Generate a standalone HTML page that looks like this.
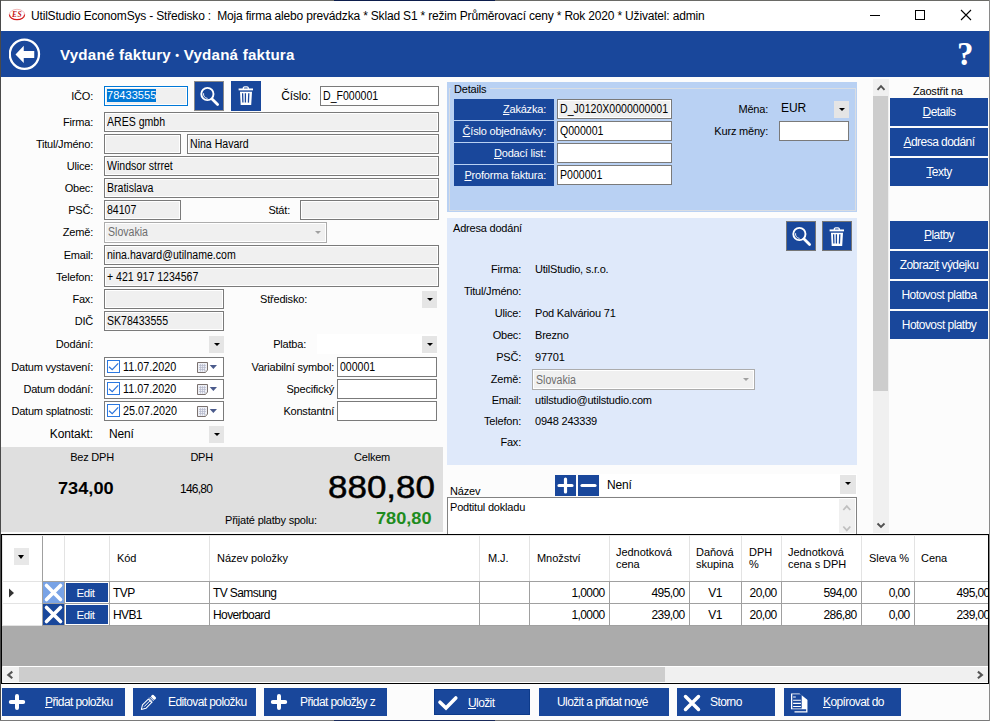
<!DOCTYPE html>
<html><head><meta charset="utf-8">
<style>
*{margin:0;padding:0;box-sizing:border-box}
html,body{width:990px;height:721px;overflow:hidden;background:#fcfcfc}
body{position:relative;font-family:"Liberation Sans",sans-serif;font-size:11px;color:#000;letter-spacing:-0.2px}
.a{position:absolute}
.t{position:absolute;white-space:nowrap;line-height:13px}
.r{text-align:right}
.tb{position:absolute;border:1px solid #7a7a7a;background:#f0f0f0;height:20px;padding-left:2px;line-height:18px;white-space:nowrap;overflow:hidden;box-shadow:inset 0 0 0 1px #fff}
.tw{background:#fff}
.tx{display:inline-block;font-size:12px;letter-spacing:0;transform:scaleX(0.88);transform-origin:0 50%;vertical-align:top}
.bb{position:absolute;background:#19479b}
.dd{position:absolute;width:15px;height:17px;background:#e5e5e5}
.dd:after{content:"";position:absolute;left:4.5px;top:7px;border-left:3px solid transparent;border-right:3px solid transparent;border-top:3px solid #000}
.rb{position:absolute;left:890px;width:98px;height:28px;background:#19479b;color:#fff;font-size:12px;text-align:center;line-height:28px;white-space:nowrap;letter-spacing:-0.55px}
.lc{position:absolute;left:454px;width:100px;height:21px;background:#19479b;color:#fff;text-align:right;padding-right:8px;line-height:21px;white-space:nowrap}
.u{text-decoration:underline}
.gl{position:absolute;background:#a0a0a0}
.fb{position:absolute;top:688px;height:28px;background:#19479b;color:#fff;font-size:12px;line-height:26px;white-space:nowrap;letter-spacing:-0.6px}
</style></head><body>
<!-- window frame -->
<div class="a" style="left:0;top:0;width:990px;height:1px;background:#6a6a66"></div>
<div class="a" style="left:0;top:0;width:1px;height:721px;background:#4a4a4a"></div>
<div class="a" style="left:989px;top:0;width:1px;height:721px;background:#8a8a8a"></div>
<div class="a" style="left:0;top:720px;width:990px;height:1px;background:#7a7a7a"></div>
<div class="a" style="left:334px;top:0;width:161px;height:1px;background:#0c1d4c"></div>
<div class="a" style="left:334px;top:720px;width:161px;height:1px;background:#1a2a5a"></div>
<!-- title bar -->
<div class="a" style="left:1px;top:1px;width:988px;height:30px;background:#fff"></div>
<svg class="a" style="left:8px;top:8px" width="18" height="14" viewBox="0 0 18 14"><path d="M1.4 6.5A7.6 5.2 0 0 1 16.6 6.5" fill="none" stroke="#eeb0b0" stroke-width="0.9"/><path d="M1.4 6.5A7.6 5.2 0 0 0 16.6 6.5" fill="none" stroke="#d41a1a" stroke-width="1.2"/><text x="9" y="9.3" font-family="Liberation Serif" font-weight="bold" font-style="italic" font-size="7.5" fill="#c41010" text-anchor="middle" letter-spacing="0.3">ES</text></svg>
<div class="t" style="left:31px;top:9px;font-size:12px;line-height:15px;color:#000;letter-spacing:-0.18px">UtilStudio EconomSys - Středisko :&nbsp; Moja firma alebo prevádzka * Sklad S1 * režim Průměrovací ceny * Rok 2020 * Uživatel: admin</div>
<div class="a" style="left:870px;top:15px;width:10px;height:1px;background:#000"></div>
<div class="a" style="left:915px;top:10px;width:10px;height:10px;border:1px solid #000"></div>
<svg class="a" style="left:960px;top:9px" width="12" height="12" viewBox="0 0 12 12"><path d="M1 1L11 11M11 1L1 11" stroke="#000" stroke-width="1.1"/></svg>
<!-- header -->
<div class="a" style="left:1px;top:31px;width:988px;height:46px;background:#19479b"></div>
<svg class="a" style="left:9px;top:38px" width="32" height="32" viewBox="0 0 32 32"><circle cx="15.4" cy="16.25" r="14.6" fill="none" stroke="#fff" stroke-width="2.3"/><path d="M6.5 16.4L14.75 7.75V13H25.25V20H14.75V25Z" fill="#fff"/></svg>
<div class="t" style="left:60px;top:47px;font-size:14px;line-height:16px;font-weight:bold;color:#fff;letter-spacing:0.2px;transform:scaleX(1.08);transform-origin:0 0">Vydané faktury <span style="font-size:10px;vertical-align:1px">•</span> Vydaná faktura</div>
<div class="t" style="left:957px;top:36px;font-family:'Liberation Serif',serif;font-weight:bold;font-size:33px;line-height:36px;color:#fff">?</div>

<!-- LEFT FORM -->
<div class="t r" style="right:897px;top:90px">IČO:</div>
<div class="tb" style="left:104px;top:86px;width:84px;border-color:#0078d7"><span style="background:#0078d7;color:#fff;line-height:13px;display:inline-block;margin-top:2px;letter-spacing:0.05px;vertical-align:top">78433555</span></div>
<div class="bb" style="left:194px;top:81px;width:30px;height:30px;border:1px solid #8a8a8a"></div>
<svg class="a" style="left:194px;top:81px" width="30" height="30" viewBox="0 0 30 30"><circle cx="13.4" cy="13" r="6.1" fill="none" stroke="#fff" stroke-width="1.9"/><path d="M18.3 18.3L23.6 23.6" stroke="#fff" stroke-width="2.8" stroke-linecap="round"/><path d="M9.6 12.2A4.3 4.3 0 0 0 13.6 17.4" fill="none" stroke="#fff" stroke-width="0.9"/></svg>
<div class="bb" style="left:231px;top:81px;width:30px;height:30px"></div>
<svg class="a" style="left:231px;top:81px" width="30" height="30" viewBox="0 0 30 30"><path d="M7.6 8.4H22" stroke="#fff" stroke-width="1.9"/><path d="M12.3 8V6.9Q12.5 5.8 13.5 5.8H16.1Q17.1 5.8 17.3 6.9V8" fill="none" stroke="#fff" stroke-width="1.3"/><path d="M9 10.7H21L20.2 23.9H9.7Z" fill="#fff"/><path d="M11.6 12.3L11.9 21.6M14.4 12.3V21.6M17.8 12.3L17.4 21.6" stroke="#19479b" stroke-width="1.3"/></svg>
<div class="t r" style="right:679px;top:90px;font-size:12px;letter-spacing:-0.15px">Číslo:</div>
<div class="tb tw" style="left:320px;top:86px;width:119px"><span class="tx">D_F000001</span></div>

<div class="t r" style="right:897px;top:116px">Firma:</div>
<div class="tb" style="left:104px;top:112px;width:335px"><span class="tx">ARES gmbh</span></div>
<div class="t r" style="right:897px;top:138px">Titul/Jméno:</div>
<div class="tb" style="left:104px;top:134px;width:77px"></div>
<div class="tb" style="left:187px;top:134px;width:252px"><span class="tx">Nina Havard</span></div>
<div class="t r" style="right:897px;top:160px">Ulice:</div>
<div class="tb" style="left:104px;top:156px;width:335px"><span class="tx">Windsor strret</span></div>
<div class="t r" style="right:897px;top:182px">Obec:</div>
<div class="tb" style="left:104px;top:178px;width:335px"><span class="tx">Bratislava</span></div>
<div class="t r" style="right:897px;top:204px">PSČ:</div>
<div class="tb" style="left:104px;top:200px;width:77px"><span class="tx">84107</span></div>
<div class="t r" style="right:700px;top:204px">Stát:</div>
<div class="tb" style="left:300px;top:200px;width:139px"></div>
<div class="t r" style="right:897px;top:226px">Země:</div>
<div class="tb" style="left:104px;top:222px;width:223px;height:21px;line-height:19px;border-color:#acacac;color:#6d6d6d;padding-left:3px"><span class="tx">Slovakia</span></div>
<div class="a" style="left:315px;top:231px;border-left:3px solid transparent;border-right:3px solid transparent;border-top:3px solid #a0a0a0"></div>
<div class="t r" style="right:897px;top:249px">Email:</div>
<div class="tb" style="left:104px;top:245px;width:335px"><span class="tx">nina.havard@utilname.com</span></div>
<div class="t r" style="right:897px;top:271px">Telefon:</div>
<div class="tb" style="left:104px;top:267px;width:335px"><span class="tx">+ 421 917 1234567</span></div>
<div class="t r" style="right:897px;top:293px">Fax:</div>
<div class="tb" style="left:104px;top:289px;width:120px"></div>
<div class="t r" style="right:683px;top:293px">Středisko:</div>
<div class="dd" style="left:422px;top:291px"></div>
<div class="t r" style="right:897px;top:315px">DIČ</div>
<div class="tb" style="left:104px;top:311px;width:120px"><span class="tx">SK78433555</span></div>
<div class="t r" style="right:897px;top:338px">Dodání:</div>
<div class="dd" style="left:209px;top:336px"></div>
<div class="t r" style="right:684px;top:338px">Platba:</div>
<div class="a" style="left:317px;top:334px;width:120px;height:20px;background:#fff"></div>
<div class="dd" style="left:422px;top:336px"></div>

<div class="t r" style="right:897px;top:361px">Datum vystavení:</div>
<div class="t r" style="right:897px;top:383px">Datum dodání:</div>
<div class="t r" style="right:897px;top:405px">Datum splatnosti:</div>
<div class="a" style="left:104px;top:357px;width:120px;height:20px;border:1px solid #7a7a7a;background:#fff"></div>
<div class="a" style="left:107px;top:360px;width:13px;height:13px;border:1px solid #2b78e0;background:#fff"></div>
<svg class="a" style="left:108px;top:361px" width="11" height="11"><path d="M1 5.8L4.2 8.6L10.2 2.4" fill="none" stroke="#2b73da" stroke-width="1.2"/></svg>
<div class="t" style="left:123px;top:361px;font-size:12px;letter-spacing:0;transform:scaleX(0.9);transform-origin:0 0">11.07.2020</div>
<svg class="a" style="left:197px;top:361px" width="22" height="12"><path d="M0.5 1.5H10.5V9L8.5 11.5H0.5Z" fill="#eef0f6" stroke="#7a716e"/><path d="M2 4.5H9M2 6.5H9M2 8.5H8M3.5 3V10.5M5.5 3V10.5M7.5 3V10.5" stroke="#b4b8cc" stroke-width="0.7"/><path d="M8.5 11.5L10.5 9H8.5Z" fill="#c0c0c0"/><path d="M12.7 4H20L16.35 8Z" fill="#4b5b8c"/></svg>
<div class="a" style="left:104px;top:379px;width:120px;height:20px;border:1px solid #7a7a7a;background:#fff"></div>
<div class="a" style="left:107px;top:382px;width:13px;height:13px;border:1px solid #2b78e0;background:#fff"></div>
<svg class="a" style="left:108px;top:383px" width="11" height="11"><path d="M1 5.8L4.2 8.6L10.2 2.4" fill="none" stroke="#2b73da" stroke-width="1.2"/></svg>
<div class="t" style="left:123px;top:383px;font-size:12px;letter-spacing:0;transform:scaleX(0.9);transform-origin:0 0">11.07.2020</div>
<svg class="a" style="left:197px;top:383px" width="22" height="12"><path d="M0.5 1.5H10.5V9L8.5 11.5H0.5Z" fill="#eef0f6" stroke="#7a716e"/><path d="M2 4.5H9M2 6.5H9M2 8.5H8M3.5 3V10.5M5.5 3V10.5M7.5 3V10.5" stroke="#b4b8cc" stroke-width="0.7"/><path d="M8.5 11.5L10.5 9H8.5Z" fill="#c0c0c0"/><path d="M12.7 4H20L16.35 8Z" fill="#4b5b8c"/></svg>
<div class="a" style="left:104px;top:401px;width:120px;height:20px;border:1px solid #7a7a7a;background:#fff"></div>
<div class="a" style="left:107px;top:404px;width:13px;height:13px;border:1px solid #2b78e0;background:#fff"></div>
<svg class="a" style="left:108px;top:405px" width="11" height="11"><path d="M1 5.8L4.2 8.6L10.2 2.4" fill="none" stroke="#2b73da" stroke-width="1.2"/></svg>
<div class="t" style="left:123px;top:405px;font-size:12px;letter-spacing:0;transform:scaleX(0.9);transform-origin:0 0">25.07.2020</div>
<svg class="a" style="left:197px;top:405px" width="22" height="12"><path d="M0.5 1.5H10.5V9L8.5 11.5H0.5Z" fill="#eef0f6" stroke="#7a716e"/><path d="M2 4.5H9M2 6.5H9M2 8.5H8M3.5 3V10.5M5.5 3V10.5M7.5 3V10.5" stroke="#b4b8cc" stroke-width="0.7"/><path d="M8.5 11.5L10.5 9H8.5Z" fill="#c0c0c0"/><path d="M12.7 4H20L16.35 8Z" fill="#4b5b8c"/></svg>

<div class="t r" style="right:656px;top:361px">Variabilní symbol:</div>
<div class="tb tw" style="left:337px;top:357px;width:100px"><span class="tx">000001</span></div>
<div class="t r" style="right:656px;top:383px">Specifický</div>
<div class="tb tw" style="left:337px;top:379px;width:100px"></div>
<div class="t r" style="right:656px;top:405px">Konstantní</div>
<div class="tb tw" style="left:337px;top:401px;width:100px"></div>
<div class="t r" style="right:897px;top:427.5px;font-size:12px;letter-spacing:-0.1px">Kontakt:</div>
<div class="t" style="left:109px;top:428px;font-size:12px;letter-spacing:-0.2px">Není</div>
<div class="dd" style="left:209px;top:426px"></div>

<!-- summary -->
<div class="a" style="left:1px;top:447px;width:442px;height:85px;background:#dfdfdf"></div>
<div class="t r" style="right:876px;top:451px">Bez DPH</div>
<div class="t r" style="right:777px;top:451px">DPH</div>
<div class="t" style="left:354px;top:451px">Celkem</div>
<div class="t" style="left:58px;top:480px;font-size:17px;line-height:18px;font-weight:bold;letter-spacing:0;transform:scaleX(1.07);transform-origin:0 0">734,00</div>
<div class="t" style="left:180px;top:482px;font-size:12px;line-height:14px;letter-spacing:-0.75px">146,80</div>
<div class="t" style="left:328px;top:471px;font-size:31px;line-height:34px;letter-spacing:0;transform:scaleX(1.128);transform-origin:0 0;-webkit-text-stroke:0.5px #000">880,80</div>
<div class="t" style="left:225px;top:513.5px">Přijaté platby spolu:</div>
<div class="t" style="left:376px;top:510px;font-size:16px;line-height:17px;font-weight:bold;color:#1e8c1e;letter-spacing:0;transform:scaleX(1.135);transform-origin:0 0">780,80</div>

<!-- DETAILS PANEL -->
<div class="a" style="left:447px;top:82px;width:410px;height:130px;background:#b9d1f3"></div>
<div class="a" style="left:449px;top:88px;width:407px;height:123px;border:1px solid #d9dde3;border-top:none"></div>
<div class="a" style="left:449px;top:88px;width:2px;height:1px;background:#d9dde3"></div>
<div class="a" style="left:490px;top:88px;width:366px;height:1px;background:#d9dde3"></div>
<div class="t" style="left:454px;top:83px">Details</div>
<div class="lc" style="top:99px"><span class="u">Z</span>akázka:</div>
<div class="lc" style="top:121px"><span class="u">Č</span>íslo objednávky:</div>
<div class="lc" style="top:143px"><span class="u">D</span>odací list:</div>
<div class="lc" style="top:165px"><span class="u">P</span>roforma faktura:</div>
<div class="tb" style="left:557px;top:99px;width:115px"><span class="tx">D_J0120X0000000001</span></div>
<div class="tb tw" style="left:557px;top:121px;width:115px"><span class="tx">Q000001</span></div>
<div class="tb tw" style="left:557px;top:143px;width:115px"></div>
<div class="tb tw" style="left:557px;top:165px;width:115px"><span class="tx">P000001</span></div>
<div class="t r" style="right:222px;top:103px">Měna:</div>
<div class="t" style="left:781px;top:102px;font-size:12px;letter-spacing:-0.1px">EUR</div>
<div class="dd" style="left:834px;top:101px"></div>
<div class="t r" style="right:222px;top:125px">Kurz měny:</div>
<div class="tb tw" style="left:779px;top:121px;width:70px"></div>

<!-- ADRESA PANEL -->
<div class="a" style="left:447px;top:218px;width:410px;height:247px;background:#dfe9fa"></div>
<div class="t" style="left:453px;top:222px">Adresa dodání</div>
<div class="bb" style="left:786px;top:221px;width:30px;height:30px;border:1px solid #767676"></div>
<svg class="a" style="left:786px;top:221px" width="30" height="30" viewBox="0 0 30 30"><circle cx="13.4" cy="13" r="6.1" fill="none" stroke="#fff" stroke-width="1.9"/><path d="M18.3 18.3L23.6 23.6" stroke="#fff" stroke-width="2.8" stroke-linecap="round"/><path d="M9.6 12.2A4.3 4.3 0 0 0 13.6 17.4" fill="none" stroke="#fff" stroke-width="0.9"/></svg>
<div class="bb" style="left:822px;top:221px;width:30px;height:30px;border:1px solid #767676"></div>
<svg class="a" style="left:822px;top:222px" width="30" height="30" viewBox="0 0 30 30"><path d="M7.6 8.4H22" stroke="#fff" stroke-width="1.9"/><path d="M12.3 8V6.9Q12.5 5.8 13.5 5.8H16.1Q17.1 5.8 17.3 6.9V8" fill="none" stroke="#fff" stroke-width="1.3"/><path d="M9 10.7H21L20.2 23.9H9.7Z" fill="#fff"/><path d="M11.6 12.3L11.9 21.6M14.4 12.3V21.6M17.8 12.3L17.4 21.6" stroke="#19479b" stroke-width="1.3"/></svg>
<div class="t r" style="right:469px;top:263px">Firma:</div><div class="t" style="left:535px;top:263px">UtilStudio, s.r.o.</div>
<div class="t r" style="right:469px;top:285px">Titul/Jméno:</div>
<div class="t r" style="right:469px;top:307px">Ulice:</div><div class="t" style="left:535px;top:307px">Pod Kalváriou 71</div>
<div class="t r" style="right:469px;top:329px">Obec:</div><div class="t" style="left:535px;top:329px">Brezno</div>
<div class="t r" style="right:469px;top:351px">PSČ:</div><div class="t" style="left:535px;top:351px">97701</div>
<div class="t r" style="right:469px;top:373px">Země:</div>
<div class="tb" style="left:532px;top:369px;width:223px;height:21px;line-height:20px;border-color:#acacac;color:#6d6d6d;padding-left:3px"><span class="tx">Slovakia</span></div>
<div class="a" style="left:743px;top:378px;border-left:3px solid transparent;border-right:3px solid transparent;border-top:3px solid #a0a0a0"></div>
<div class="t r" style="right:469px;top:394px">Email:</div><div class="t" style="left:535px;top:394px">utilstudio@utilstudio.com</div>
<div class="t r" style="right:469px;top:415px">Telefon:</div><div class="t" style="left:535px;top:415px">0948 243339</div>
<div class="t r" style="right:469px;top:436px">Fax:</div>

<!-- NAZEV -->
<div class="t" style="left:450px;top:485px">Název</div>
<div class="a" style="left:600px;top:474px;width:257px;height:22px;background:#fff"></div>
<div class="bb" style="left:555px;top:475px;width:21px;height:21px"></div>
<svg class="a" style="left:555px;top:475px" width="21" height="21"><path d="M10.5 4V17M4 10.5H17" stroke="#fff" stroke-width="3.2" stroke-linecap="round"/></svg>
<div class="bb" style="left:578px;top:475px;width:21px;height:21px"></div>
<svg class="a" style="left:578px;top:475px" width="21" height="21"><path d="M4 10.5H17" stroke="#fff" stroke-width="3.2" stroke-linecap="round"/></svg>
<div class="t" style="left:607px;top:478.5px;font-size:12px;letter-spacing:-0.2px">Není</div>
<div class="dd" style="left:840px;top:475px;width:16px;height:19px"></div>
<div class="a" style="left:447px;top:497px;width:410px;height:40px;border:1px solid #828282;background:#fff"></div>
<div class="t" style="left:450px;top:501px">Podtitul dokladu</div>
<div class="a" style="left:839px;top:499px;width:16px;height:34px;background:#f0f0f0"></div>
<svg class="a" style="left:839px;top:499px" width="16" height="34"><path d="M4.3 11L7.8 7.2L11.3 11" fill="none" stroke="#c0c0c0" stroke-width="1.8"/><path d="M4.3 27.5L7.8 31.3L11.3 27.5" fill="none" stroke="#c0c0c0" stroke-width="1.8"/></svg>

<!-- vertical scrollbar -->
<div class="a" style="left:873px;top:79px;width:16px;height:454px;background:#f0f0f0"></div>
<div class="a" style="left:873px;top:96px;width:15px;height:295px;background:#cdcdcd"></div>
<svg class="a" style="left:873px;top:79px" width="16" height="17"><path d="M4.5 10.8L8 7.2L11.5 10.8" fill="none" stroke="#505050" stroke-width="1.9"/></svg>
<svg class="a" style="left:873px;top:516px" width="16" height="17"><path d="M4.5 7.5L8 11L11.5 7.5" fill="none" stroke="#505050" stroke-width="1.9"/></svg>

<!-- right buttons -->
<div class="t" style="left:913px;top:85px;font-size:11px">Zaostřit na</div>
<div class="rb" style="top:98px"><span class="u">D</span>etails</div>
<div class="rb" style="top:128px"><span class="u">A</span>dresa dodání</div>
<div class="rb" style="top:158px"><span class="u">T</span>exty</div>
<div class="rb" style="top:221px"><span class="u">P</span>latby</div>
<div class="rb" style="top:251px">Zobrazi<span class="u">t</span> výdejku</div>
<div class="rb" style="top:281px">Hotovost platba</div>
<div class="rb" style="top:311px">Hotovost platby</div>



<!-- grid -->
<div class="a" style="left:1px;top:534px;width:988px;height:150px;background:#fff;border:1px solid #000"></div>
<div class="a" style="left:2px;top:535px;width:986px;height:1px;background:#e6e6e6"></div>
<div class="a" style="left:2px;top:535px;width:1px;height:148px;background:#e6e6e6"></div>
<div class="a" style="left:14px;top:548px;width:15px;height:17px;background:#e8e8e8"></div>
<div class="a" style="left:18px;top:555px;border-left:3.5px solid transparent;border-right:3.5px solid transparent;border-top:4px solid #000"></div>
<div class="a" style="left:42px;top:536px;width:1px;height:45px;background:#a0a0a0"></div>
<div class="a" style="left:42px;top:581px;width:1px;height:45px;background:#a0a0a0"></div>
<div class="a" style="left:64px;top:536px;width:1px;height:45px;background:#e3e3e3"></div>
<div class="a" style="left:64px;top:581px;width:1px;height:45px;background:#a0a0a0"></div>
<div class="a" style="left:109px;top:536px;width:1px;height:45px;background:#e3e3e3"></div>
<div class="a" style="left:109px;top:581px;width:1px;height:45px;background:#a0a0a0"></div>
<div class="a" style="left:209px;top:536px;width:1px;height:45px;background:#e3e3e3"></div>
<div class="a" style="left:209px;top:581px;width:1px;height:45px;background:#a0a0a0"></div>
<div class="a" style="left:479px;top:536px;width:1px;height:45px;background:#e3e3e3"></div>
<div class="a" style="left:479px;top:581px;width:1px;height:45px;background:#a0a0a0"></div>
<div class="a" style="left:529px;top:536px;width:1px;height:45px;background:#e3e3e3"></div>
<div class="a" style="left:529px;top:581px;width:1px;height:45px;background:#a0a0a0"></div>
<div class="a" style="left:609px;top:536px;width:1px;height:45px;background:#e3e3e3"></div>
<div class="a" style="left:609px;top:581px;width:1px;height:45px;background:#a0a0a0"></div>
<div class="a" style="left:689px;top:536px;width:1px;height:45px;background:#e3e3e3"></div>
<div class="a" style="left:689px;top:581px;width:1px;height:45px;background:#a0a0a0"></div>
<div class="a" style="left:741px;top:536px;width:1px;height:45px;background:#e3e3e3"></div>
<div class="a" style="left:741px;top:581px;width:1px;height:45px;background:#a0a0a0"></div>
<div class="a" style="left:781px;top:536px;width:1px;height:45px;background:#e3e3e3"></div>
<div class="a" style="left:781px;top:581px;width:1px;height:45px;background:#a0a0a0"></div>
<div class="a" style="left:861px;top:536px;width:1px;height:45px;background:#e3e3e3"></div>
<div class="a" style="left:861px;top:581px;width:1px;height:45px;background:#a0a0a0"></div>
<div class="a" style="left:914px;top:536px;width:1px;height:45px;background:#e3e3e3"></div>
<div class="a" style="left:914px;top:581px;width:1px;height:45px;background:#a0a0a0"></div>
<div class="a" style="left:3px;top:581px;width:39px;height:1px;background:#e3e3e3"></div>
<div class="a" style="left:42px;top:581px;width:946px;height:1px;background:#a0a0a0"></div>
<div class="a" style="left:3px;top:603px;width:39px;height:1px;background:#e3e3e3"></div>
<div class="a" style="left:42px;top:603px;width:946px;height:1px;background:#a0a0a0"></div>
<div class="a" style="left:3px;top:625px;width:39px;height:1px;background:#e3e3e3"></div>
<div class="a" style="left:42px;top:625px;width:946px;height:1px;background:#a0a0a0"></div>
<div class="a" style="left:2px;top:626px;width:986px;height:40px;background:#ababab"></div>
<div class="a" style="left:2px;top:667px;width:986px;height:15px;background:#f0f0f0"></div>
<div class="a" style="left:19px;top:667px;width:646px;height:15px;background:#cdcdcd"></div>
<svg class="a" style="left:6px;top:670px" width="10" height="10"><path d="M6.3 1.6L2.3 4.9L6.3 8.2" fill="none" stroke="#555" stroke-width="2.1"/></svg>
<svg class="a" style="left:974px;top:670px" width="10" height="10"><path d="M3.9 1.6L7.9 4.9L3.9 8.2" fill="none" stroke="#555" stroke-width="2.1"/></svg>
<div class="t" style="left:117px;top:552px;font-size:11px;letter-spacing:-0.05px">Kód</div>
<div class="t" style="left:217px;top:552px;font-size:11px;letter-spacing:-0.05px">Název položky</div>
<div class="t" style="left:488px;top:552px;font-size:11px;letter-spacing:-0.05px">M.J.</div>
<div class="t" style="left:537px;top:552px;font-size:11px;letter-spacing:-0.05px">Množství</div>
<div class="t" style="left:616px;top:545.5px;line-height:12.5px;font-size:11px;letter-spacing:-0.05px">Jednotková<br>cena</div>
<div class="t" style="left:696px;top:545.5px;line-height:12.5px;font-size:11px;letter-spacing:-0.05px">Daňová<br>skupina</div>
<div class="t" style="left:749px;top:545.5px;line-height:12.5px;font-size:11px;letter-spacing:-0.05px">DPH<br>%</div>
<div class="t" style="left:788px;top:545.5px;line-height:12.5px;font-size:11px;letter-spacing:-0.05px">Jednotková<br>cena s DPH</div>
<div class="t" style="left:869px;top:552px;font-size:11px;letter-spacing:-0.05px">Sleva %</div>
<div class="t" style="left:921px;top:552px;font-size:11px;letter-spacing:-0.05px">Cena</div>
<div class="a" style="left:43px;top:582px;width:21px;height:21px;background:#79a3e6"></div>
<svg class="a" style="left:43px;top:582px" width="21" height="21"><path d="M3.5 3.5L17.5 17.5M17.5 3.5L3.5 17.5" stroke="#fff" stroke-width="3.6" stroke-linecap="round"/></svg>
<div class="a" style="left:66px;top:583px;width:42px;height:19px;background:#19479b;color:#fff;text-align:center;line-height:20px;font-size:11.5px;letter-spacing:-0.4px;padding-right:3px">Edit</div>
<div class="t" style="left:113px;top:587px;font-size:12px;letter-spacing:-0.6px">TVP</div>
<div class="t" style="left:213px;top:587px;font-size:12px;letter-spacing:-0.6px">TV Samsung</div>
<div class="t" style="left:544px;width:60.6px;text-align:right;top:587px;font-size:12px;letter-spacing:-0.6px">1,0000</div>
<div class="t" style="left:624px;width:60.6px;text-align:right;top:587px;font-size:12px;letter-spacing:-0.6px">495,00</div>
<div class="t" style="left:716px;width:60.6px;text-align:right;top:587px;font-size:12px;letter-spacing:-0.6px">20,00</div>
<div class="t" style="left:796px;width:60.6px;text-align:right;top:587px;font-size:12px;letter-spacing:-0.6px">594,00</div>
<div class="t" style="left:849px;width:60.6px;text-align:right;top:587px;font-size:12px;letter-spacing:-0.6px">0,00</div>
<div class="t" style="left:929px;width:60.6px;text-align:right;top:587px;font-size:12px;letter-spacing:-0.6px">495,00</div>
<div class="t" style="left:689px;width:52px;text-align:center;top:587px;font-size:12px;letter-spacing:-0.6px">V1</div>
<div class="a" style="left:43px;top:604px;width:21px;height:21px;background:#19479b"></div>
<svg class="a" style="left:43px;top:604px" width="21" height="21"><path d="M3.5 3.5L17.5 17.5M17.5 3.5L3.5 17.5" stroke="#fff" stroke-width="3.6" stroke-linecap="round"/></svg>
<div class="a" style="left:66px;top:605px;width:42px;height:19px;background:#19479b;color:#fff;text-align:center;line-height:20px;font-size:11.5px;letter-spacing:-0.4px;padding-right:3px">Edit</div>
<div class="t" style="left:113px;top:609px;font-size:12px;letter-spacing:-0.6px">HVB1</div>
<div class="t" style="left:213px;top:609px;font-size:12px;letter-spacing:-0.6px">Hoverboard</div>
<div class="t" style="left:544px;width:60.6px;text-align:right;top:609px;font-size:12px;letter-spacing:-0.6px">1,0000</div>
<div class="t" style="left:624px;width:60.6px;text-align:right;top:609px;font-size:12px;letter-spacing:-0.6px">239,00</div>
<div class="t" style="left:716px;width:60.6px;text-align:right;top:609px;font-size:12px;letter-spacing:-0.6px">20,00</div>
<div class="t" style="left:796px;width:60.6px;text-align:right;top:609px;font-size:12px;letter-spacing:-0.6px">286,80</div>
<div class="t" style="left:849px;width:60.6px;text-align:right;top:609px;font-size:12px;letter-spacing:-0.6px">0,00</div>
<div class="t" style="left:929px;width:60.6px;text-align:right;top:609px;font-size:12px;letter-spacing:-0.6px">239,00</div>
<div class="t" style="left:689px;width:52px;text-align:center;top:609px;font-size:12px;letter-spacing:-0.6px">V1</div>
<svg class="a" style="left:8px;top:588px" width="8" height="10"><path d="M1 0.5L6 5L1 9.5Z" fill="#333"/></svg>
<div class="a" style="left:988px;top:534px;width:1px;height:150px;background:#000"></div>
<div class="a" style="left:989px;top:0;width:1px;height:721px;background:#8a8a8a"></div>
<!-- bottom buttons -->
<div class="fb" style="left:2px;width:123px"><svg class="a" style="left:0;top:0" width="30" height="28"><path d="M15 7.9V20.1M8.8 14H21.2" stroke="#fff" stroke-width="4" stroke-linecap="round"/></svg><span class="a" style="left:43px;top:1px"><span class="u">P</span>řidat položku</span></div>
<div class="fb" style="left:133px;width:123px"><svg class="a" style="left:0;top:0" width="30" height="28"><g transform="translate(8.4 21.4) rotate(-45) scale(0.94)"><path d="M0 0L4.2 -2.6H13V2.6H4.2Z" fill="none" stroke="#fff" stroke-width="1.1" stroke-linejoin="round"/><path d="M4.2 0H13" stroke="#fff" stroke-width="1"/><path d="M13.9 -2.8V2.8M15.6 -2.8V2.8" stroke="#fff" stroke-width="1"/><rect x="16.6" y="-2.8" width="3.4" height="5.6" rx="1.2" fill="#fff"/></g></svg><span class="a" style="left:35px;top:1px">Editovat položku</span></div>
<div class="fb" style="left:264px;width:123px"><svg class="a" style="left:0;top:0" width="30" height="28"><path d="M15 7.9V20.1M8.8 14H21.2" stroke="#fff" stroke-width="4" stroke-linecap="round"/></svg><span class="a" style="left:36px;top:1px">Přidat polož<span class="u">k</span>y z</span></div>
<div class="fb" style="left:434px;top:689px;height:26px;line-height:26px;width:96px;border:1px solid #0c3a8a"><svg class="a" style="left:-1px;top:-2px" width="30" height="28"><path d="M6 14.2L12 20L21.8 10" fill="none" stroke="#fff" stroke-width="3.6" stroke-linecap="round"/></svg><span class="a" style="left:33px;top:0"><span class="u">U</span>ložit</span></div>
<div class="fb" style="left:539px;width:130px"><span class="a" style="left:18px;top:1px">Uložit a přidat no<span class="u">v</span>é</span></div>
<div class="fb" style="left:677px;width:98px"><svg class="a" style="left:0;top:0" width="30" height="28"><path d="M8.5 8.5L21.5 21.5M21.5 8.5L8.5 21.5" stroke="#fff" stroke-width="3.5" stroke-linecap="round"/></svg><span class="a" style="left:33px;top:1px">Storno</span></div>
<div class="fb" style="left:784px;width:117px"><svg class="a" style="left:0;top:0" width="30" height="28"><path d="M10.5 23.8H22.8V11.7" fill="none" stroke="#fff" stroke-width="1.3"/><path d="M18.7 13.6H21M18.7 16.7H21M18.7 19.8H21" stroke="#fff" stroke-width="1"/><path d="M7 5.5H15.5L23 11.5V21.3H7Z" fill="#fff"/><rect x="8.3" y="6.3" width="9.4" height="14.2" fill="#19479b"/><path d="M9.1 9H11.8M9.1 12.2H16.9M9.1 15.4H16.9M9.1 18.5H16.9" stroke="#fff" stroke-width="1.1"/></svg><span class="a" style="left:39px;top:1px"><span class="u">K</span>opírovat do</span></div>
</body></html>
